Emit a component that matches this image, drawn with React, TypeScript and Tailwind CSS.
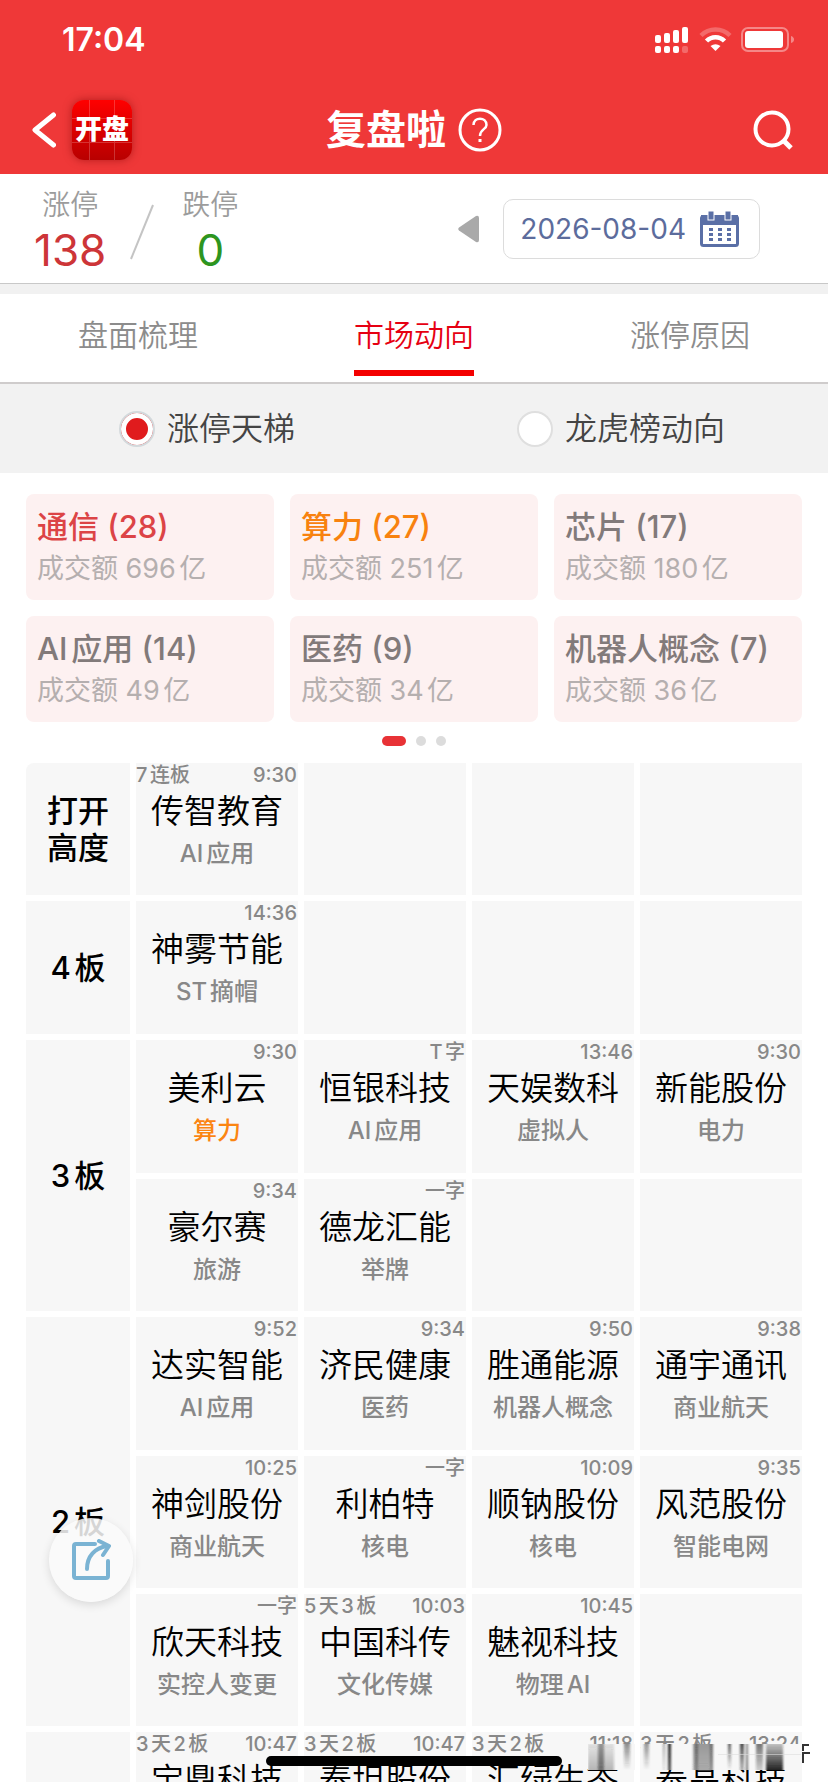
import React, { useState } from "react";
import clsx from "clsx";

interface Sector {
  name: string;
  count: number;
  amount: number;
  color: string;
}

interface Stock {
  name: string;
  tag: string;
  time: string;
  streak?: string;
  hot?: boolean;
}

interface Level {
  label: string[];
  rows: Stock[][];
}

const COLUMNS = 4;

const tabs = ["盘面梳理", "市场动向", "涨停原因"];
const views = ["涨停天梯", "龙虎榜动向"];

const sectors: Sector[] = [
  { name: "通信", count: 28, amount: 696, color: "text-[#dc4446]" },
  { name: "算力", count: 27, amount: 251, color: "text-[#f8820f]" },
  { name: "芯片", count: 17, amount: 180, color: "text-[#827a7a]" },
  { name: "AI应用", count: 14, amount: 49, color: "text-[#827a7a]" },
  { name: "医药", count: 9, amount: 34, color: "text-[#827a7a]" },
  { name: "机器人概念", count: 7, amount: 36, color: "text-[#827a7a]" },
];

const levels: Level[] = [
  {
    label: ["打开", "高度"],
    rows: [[{ name: "传智教育", tag: "AI应用", time: "9:30", streak: "7连板" }]],
  },
  {
    label: ["4板"],
    rows: [[{ name: "神雾节能", tag: "ST摘帽", time: "14:36" }]],
  },
  {
    label: ["3板"],
    rows: [
      [
        { name: "美利云", tag: "算力", time: "9:30", hot: true },
        { name: "恒银科技", tag: "AI应用", time: "T字" },
        { name: "天娱数科", tag: "虚拟人", time: "13:46" },
        { name: "新能股份", tag: "电力", time: "9:30" },
      ],
      [
        { name: "豪尔赛", tag: "旅游", time: "9:34" },
        { name: "德龙汇能", tag: "举牌", time: "一字" },
      ],
    ],
  },
  {
    label: ["2板"],
    rows: [
      [
        { name: "达实智能", tag: "AI应用", time: "9:52" },
        { name: "济民健康", tag: "医药", time: "9:34" },
        { name: "胜通能源", tag: "机器人概念", time: "9:50" },
        { name: "通宇通讯", tag: "商业航天", time: "9:38" },
      ],
      [
        { name: "神剑股份", tag: "商业航天", time: "10:25" },
        { name: "利柏特", tag: "核电", time: "一字" },
        { name: "顺钠股份", tag: "核电", time: "10:09" },
        { name: "风范股份", tag: "智能电网", time: "9:35" },
      ],
      [
        { name: "欣天科技", tag: "实控人变更", time: "一字" },
        { name: "中国科传", tag: "文化传媒", time: "10:03", streak: "5天3板" },
        { name: "魅视科技", tag: "物理AI", time: "10:45" },
      ],
    ],
  },
  {
    label: [],
    rows: [
      [
        { name: "宝鼎科技", tag: "", time: "10:47", streak: "3天2板" },
        { name: "泰坦股份", tag: "", time: "10:47", streak: "3天2板" },
        { name: "汇绿生态", tag: "", time: "11:18", streak: "3天2板" },
        { name: "泰晶科技", tag: "", time: "13:24", streak: "3天2板" },
      ],
    ],
  },
];

const StatusIcons = () => (
  <svg width="140" height="26" viewBox="0 0 140 26" fill="white">
    <rect x="0" y="8" width="6" height="8" rx="2" />
    <rect x="9" y="6" width="6" height="10" rx="2" />
    <rect x="18" y="3" width="6" height="13" rx="2" />
    <rect x="27" y="0" width="6" height="16" rx="2" />
    <rect x="0" y="19" width="6" height="7" rx="2" />
    <rect x="9" y="19" width="6" height="7" rx="2" />
    <rect x="18" y="19" width="6" height="7" rx="2" />
    <rect x="27" y="19" width="6" height="7" rx="2" opacity="0.25" />
    <g fill="none" stroke="white">
      <path d="M46 8.500 A20.500 20.500 0 0 1 75 8.500" strokeWidth="4.500" opacity="0.25" />
      <path d="M51.500 14 A12.500 12.500 0 0 1 69.500 14" strokeWidth="4.500" />
    </g>
    <path d="M60.500 24 L55.500 19 Q60.500 15.500 65.500 19 Z" />
    <rect x="87" y="1" width="46" height="23" rx="6" fill="none" stroke="white" strokeWidth="2" opacity="0.4" />
    <rect x="90" y="4" width="38" height="17" rx="3" />
    <path d="M136 9 Q139 10 139 12.500 Q139 15 136 16 Z" opacity="0.4" />
  </svg>
);

const CalendarIcon = () => (
  <svg width="39" height="36" viewBox="0 0 39 36">
    <rect x="1.500" y="5.500" width="36" height="29" rx="2" fill="white" stroke="#5a6fa6" strokeWidth="3" />
    <rect x="1" y="4" width="37" height="10" fill="#5a6fa6" />
    <rect x="8" y="0" width="6" height="9" fill="#5a6fa6" stroke="white" />
    <rect x="25" y="0" width="6" height="9" fill="#5a6fa6" stroke="white" />
    {[17, 22, 27].map((y) =>
      [9, 18, 27].map((x) => (
        <rect key={`${x}-${y}`} x={x} y={y} width="4" height="3" fill="#5a6fa6" />
      )),
    )}
  </svg>
);

const Header = () => (
  <header className="bg-[#ef3838] text-white">
    <div className="flex h-20 items-center justify-between pl-[62px] pr-[33px]">
      <span className="text-[32px] font-semibold leading-10">17:04</span>
      <StatusIcons />
    </div>
    <div className="grid h-[94px] grid-cols-[1fr_auto_1fr] items-center px-8 pt-[6px]">
      <div className="flex items-center gap-4">
        <button type="button" aria-label="返回">
          <svg width="24" height="36" viewBox="0 0 24 36" fill="none" stroke="white" strokeWidth="5" strokeLinecap="round" strokeLinejoin="round">
            <path d="M21.500 3 L3 18 L21.500 33" />
          </svg>
        </button>
        <span className="relative flex size-[60px] items-center justify-center rounded-xl bg-linear-to-b from-[#ff0000] to-[#b80000] text-[27px] font-black leading-8 shadow-[0_0_8px_rgba(120,0,0,0.5)]">
          <svg className="absolute inset-0" width="60" height="60" viewBox="0 0 60 60" stroke="white" opacity="0.2">
            <path d="M17.500 0 V60 M42.500 0 V60 M0 18.500 H60 M0 42.500 H60" />
          </svg>
          <span className="relative">开盘</span>
        </span>
      </div>
      <div className="flex items-center gap-3">
        <h1 className="text-[40px] font-semibold leading-[48px]">复盘啦</h1>
        <button type="button" aria-label="帮助">
          <svg width="44" height="44" viewBox="0 0 44 44" fill="none" stroke="white" strokeWidth="3">
            <circle cx="22" cy="22" r="20" />
            <path d="M15.500 17 C15.500 8.500 28.500 8.500 28.500 17 C28.500 21.500 22 21 22 28" strokeWidth="2.500" />
            <path d="M22 31 V34" />
          </svg>
        </button>
      </div>
      <button type="button" aria-label="搜索" className="justify-self-end pr-[3px]">
        <svg width="40" height="40" viewBox="0 0 40 40" fill="none" stroke="white" strokeWidth="4">
          <circle cx="19" cy="19" r="16.500" />
          <path d="M30 30 L38 38" strokeWidth="5" />
        </svg>
      </button>
    </div>
  </header>
);

const Stat = ({ label, value, color }: { label: string; value: number; color: string }) => (
  <div className="flex flex-col items-center">
    <span className="text-[28px] font-[350] leading-9 text-[#9c9c9c]">{label}</span>
    <span className={clsx("text-[44px] leading-[54px]", color)}>{value}</span>
  </div>
);

const Summary = () => (
  <section className="flex h-[110px] items-center justify-between border-b border-[#c8c8c8] pl-[34px] pr-[68px]">
    <div className="flex items-center gap-6 pt-[6px]">
      <Stat label="涨停" value={138} color="text-[#cd3538]" />
      <svg width="24" height="56" viewBox="0 0 24 56" stroke="#c4c4c4" strokeWidth="2">
        <path d="M1 55 L23 1" />
      </svg>
      <div className="pl-1">
        <Stat label="跌停" value={0} color="text-[#2d951f]" />
      </div>
    </div>
    <div className="flex items-center gap-6">
      <button type="button" aria-label="前一天">
        <svg width="21" height="28" viewBox="0 0 21 28" fill="#a9a9a9">
          <path d="M1 12.500 L18 1 Q21 0 21 3 V25 Q21 28 18 27 L1 15.500 Q-0.500 14 1 12.500 Z" />
        </svg>
      </button>
      <button
        type="button"
        className="flex h-[60px] items-center gap-[14px] rounded-[10px] border border-[#dcdcdc] pl-4 pr-5 text-[28px] leading-8 text-[#5c6c9c]"
      >
        2026-08-04
        <CalendarIcon />
      </button>
    </div>
  </section>
);

const SectorCard = ({ name, count, amount, color }: Sector) => (
  <div className="h-[106px] rounded-lg bg-[#fdf1f1] px-[11px] pt-3">
    <p className={clsx("text-[31px] font-medium leading-[42px]", color)}>
      {name} ({count})
    </p>
    <p className="text-[27px] leading-[42px] text-[#b5afaf]">成交额 {amount}亿</p>
  </div>
);

const StockCell = ({ stock }: { stock?: Stock }) => (
  <td className="bg-[#f7f7f7] p-0 align-top">
    {stock && (
      <div className="flex flex-col items-center">
        <div className="flex w-full justify-between pr-px text-[20px] font-medium leading-6 text-[#888]">
          <span>{stock.streak}</span>
          <span>{stock.time}</span>
        </div>
        <span className="text-[33px] font-[350] leading-12 text-black">{stock.name}</span>
        <span
          className={clsx(
            "text-2xl font-medium leading-[38px]",
            stock.hot ? "text-[#fb8512]" : "text-[#888]",
          )}
        >
          {stock.tag}
        </span>
      </div>
    )}
  </td>
);

const Ladder = () => (
  <table className="w-full table-fixed border-separate border-spacing-[6px]">
    <colgroup>
      <col className="w-[104px]" />
      <col />
      <col />
      <col />
      <col />
    </colgroup>
    {levels.map((level, i) => (
      <tbody key={i}>
        {level.rows.map((row, r) => (
          <tr key={r} className={i > 0 && r === 0 ? "h-[133px]" : "h-[132px]"}>
            {r === 0 && (
              <th
                scope="rowgroup"
                rowSpan={level.rows.length}
                className={clsx(
                  "bg-[#f7f7f7] p-0 text-[31px] font-medium leading-[37px] text-black",
                  i === 0 && "rounded-tl-lg",
                )}
              >
                {level.label.map((line) => (
                  <span key={line} className="block">
                    {line}
                  </span>
                ))}
              </th>
            )}
            {Array.from({ length: COLUMNS }, (_, c) => (
              <StockCell key={c} stock={row[c]} />
            ))}
          </tr>
        ))}
      </tbody>
    ))}
  </table>
);

// Streaked strip over the lower right corner: x, width, top opacity, bottom opacity
const streaks = [
  [0, 26, 0.1, 0.3],
  [10, 6, 0.4, 0.5],
  [36, 6, 0.5, 0],
  [56, 5, 0.45, 0],
  [75, 2, 0.4, 0.1],
  [80, 3, 0.95, 0.75],
  [105, 20, 0.45, 0.35],
  [107, 3, 0.4, 0.3],
  [122, 3, 0.4, 0.2],
  [140, 3, 0.7, 0],
  [152, 4, 0.8, 0.3],
  [158, 2, 0.5, 0.6],
  [168, 7, 0.6, 0.2],
  [178, 17, 0.25, 1],
];

const Smudge = () => (
  <svg className="pointer-events-none absolute bottom-3 right-4" width="224" height="28" viewBox="0 0 224 28">
    <defs>
      <filter id="streak-blur">
        <feGaussianBlur stdDeviation="1 0" />
      </filter>
      {streaks.map(([, , top, bottom], i) => (
        <linearGradient key={i} id={`streak-${i}`} x1="0" y1="0" x2="0" y2="1">
          <stop offset="0" stopColor="#222" stopOpacity={top} />
          <stop offset="1" stopColor="#222" stopOpacity={bottom} />
        </linearGradient>
      ))}
    </defs>
    <rect x="0" y="2" width="47" height="26" fill="#f7f7f7" />
    <rect x="53" y="2" width="160" height="26" fill="#f7f7f7" />
    <g filter="url(#streak-blur)">
      {streaks.map(([x, width], i) => (
        <rect key={i} x={x} y="2" width={width} height="26" fill={`url(#streak-${i})`} />
      ))}
    </g>
    <path d="M130 12.500 H213" stroke="#ddd" opacity="0.6" />
    <path d="M215 21 V11 H222 M215 9 V3 H221" fill="none" stroke="#333" strokeWidth="2" />
  </svg>
);

const App = () => {
  const [tab, setTab] = useState(tabs[1]);
  const [view, setView] = useState(views[0]);

  return (
    <div className="relative h-screen overflow-hidden bg-white font-['Inter','Noto_Sans_CJK_SC',sans-serif] [text-autospace:normal]">
      <Header />
      <Summary />
      <nav className="flex border-b-2 border-t-10 border-b-[#cfcccc] border-t-[#f1f1f1]">
        {tabs.map((item) => (
          <button
            key={item}
            type="button"
            onClick={() => setTab(item)}
            className="flex flex-1 justify-center pb-[6px]"
          >
            <span
              className={clsx(
                "border-b-6 pb-[15px] pt-[21px] text-[30px] font-[350] leading-10",
                item === tab ? "border-[#f40000] text-[#e60012]" : "border-transparent text-[#8c8c8c]",
              )}
            >
              {item}
            </span>
          </button>
        ))}
      </nav>
      <div className="flex h-[89px] bg-[#f2f2f2]">
        {views.map((item) => (
          <label
            key={item}
            className="flex flex-1 items-center justify-center gap-3 text-[32px] font-[350] leading-10 text-[#444]"
          >
            <input
              type="radio"
              name="view"
              checked={item === view}
              onChange={() => setView(item)}
              className="size-9 appearance-none rounded-full border-2 border-[#dfdfdf] bg-white checked:border-[#d3d9dc] checked:bg-[#e01b1d] checked:shadow-[inset_0_0_0_5px_white]"
            />
            {item}
          </label>
        ))}
      </div>
      <section className="grid grid-cols-3 gap-4 px-[26px] pt-[21px]">
        {sectors.map((sector) => (
          <SectorCard key={sector.name} {...sector} />
        ))}
      </section>
      <div className="flex items-center justify-center gap-[10px] pb-[11px] pt-[14px]">
        <span className="h-[10px] w-6 rounded-full bg-[#e83236]" />
        <span className="size-[10px] rounded-full bg-[#dcdcdc]" />
        <span className="size-[10px] rounded-full bg-[#dcdcdc]" />
      </div>
      <main className="px-5">
        <Ladder />
      </main>
      <Smudge />
      <button
        type="button"
        aria-label="分享"
        className="absolute bottom-[180px] left-[49px] flex size-[84px] items-center justify-center rounded-full bg-[#fafafa]/85 shadow-[0_3px_10px_rgba(0,0,0,0.12)]"
      >
        <svg width="40" height="42" viewBox="0 0 40 42" fill="none" stroke="#7ab3d3" strokeWidth="4" strokeLinecap="round" strokeLinejoin="round">
          <path d="M24 5 H5 Q3 5 3 7 V37 Q3 39 5 39 H35 Q37 39 37 37 V22" />
          <path d="M16 30 C16 17 24 9 36 7" />
          <path d="M28 2 L38 7 L32 16" />
        </svg>
      </button>
      <div className="absolute bottom-4 left-1/2 h-[10px] w-[296px] -translate-x-1/2 rounded-full bg-black" />
    </div>
  );
};

export default App;
